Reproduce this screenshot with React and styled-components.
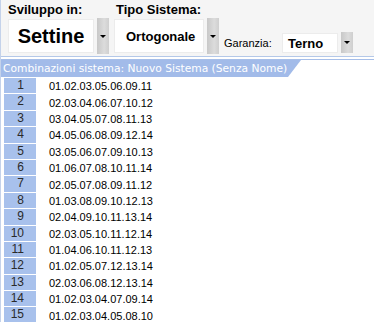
import React from "react";
import styled, { createGlobalStyle } from "styled-components";

const Global = createGlobalStyle`
  html, body { margin: 0; padding: 0; background: #ffffff; }
  body { font-family: "Liberation Sans", Arial, sans-serif; }
`;

const Page = styled.div`
  width: 374px;
  height: 322px;
  overflow: hidden;
  background: #ffffff;
  border-left: 1px solid #c4d2ea;
  box-sizing: border-box;
`;

const Toolbar = styled.div`
  height: 56px;
  background: #f5f5f5;
  display: flex;
  align-items: flex-start;
  box-sizing: border-box;
`;

const Group = styled.div`
  display: flex;
  flex-direction: column;
  margin-left: ${({ $ml }) => $ml}px;
`;

const Label = styled.div`
  font-size: 13px;
  font-weight: 700;
  color: #000;
  height: 16px;
  line-height: 16px;
  margin-top: 2px;
  padding-left: ${({ $pl }) => $pl || 0}px;
`;

const SmallLabel = styled.div`
  font-size: 11px;
  color: #000;
  margin-top: 37px;
  margin-left: 5px;
  width: 60px;
`;

const Select = styled.div`
  display: flex;
  align-items: stretch;
  margin-top: ${({ $mt }) => $mt || 0}px;
`;

const Box = styled.div`
  width: ${({ $w }) => $w}px;
  height: ${({ $h }) => $h}px;
  margin-top: 1px;
  background: #ffffff;
  border: 1px solid #ececec;
  box-sizing: border-box;
  display: flex;
  align-items: center;
  justify-content: ${({ $center }) => ($center ? "center" : "flex-start")};
  padding-left: ${({ $pl }) => $pl || 0}px;
  font-size: ${({ $fs }) => $fs}px;
  font-weight: 700;
  color: #000;
`;

const Btn = styled.div`
  width: 12px;
  height: ${({ $h }) => $h}px;
  margin-left: ${({ $ml }) => $ml || 2}px;
  background: linear-gradient(to right, #c8c8c8, #dcdcdc 60%, #cfcfcf);
  display: flex;
  align-items: center;
  justify-content: center;
`;

const Arrow = styled.div`
  width: 0;
  height: 0;
  border-left: 3px solid transparent;
  border-right: 3px solid transparent;
  border-top: 3px solid #000;
`;

const Lines = styled.div`
  height: 4px;
  border-top: 1px solid #b4c8e8;
  border-bottom: 1px solid #a6bee8;
  box-sizing: border-box;
  background: #ffffff;
`;

const TabRow = styled.div`
  height: 17px;
  display: flex;
`;

const Tab = styled.div`
  height: 17px;
  width: 300px;
  background: #a2bbe9;
  clip-path: polygon(0 0, 100% 0, 287px 100%, 0 100%);
  color: #ffffff;
  font-family: "DejaVu Sans", Verdana, sans-serif;
  font-size: 10.7px;
  line-height: 17px;
  padding-left: 2px;
  box-sizing: border-box;
  white-space: nowrap;
`;

const List = styled.div`
  display: flex;
  flex-direction: column;
  padding-top: 1px;
`;

const Row = styled.div`
  height: 16.4px;
  display: flex;
  align-items: center;
`;

const Num = styled.div`
  width: 32px;
  height: 100%;
  margin-left: 3px;
  background: #a8c1ec;
  border-bottom: 1px solid #ffffff;
  box-sizing: border-box;
  text-align: right;
  padding-right: 12px;
  font-size: 12px;
  line-height: 15px;
  color: #2a2a2a;
`;

const Combo = styled.div`
  margin-left: 13px;
  font-size: 11px;
  color: #000;
`;

const combos = [
  "01.02.03.05.06.09.11",
  "02.03.04.06.07.10.12",
  "03.04.05.07.08.11.13",
  "04.05.06.08.09.12.14",
  "03.05.06.07.09.10.13",
  "01.06.07.08.10.11.14",
  "02.05.07.08.09.11.12",
  "01.03.08.09.10.12.13",
  "02.04.09.10.11.13.14",
  "02.03.05.10.11.12.14",
  "01.04.06.10.11.12.13",
  "01.02.05.07.12.13.14",
  "02.03.06.08.12.13.14",
  "01.02.03.04.07.09.14",
  "01.02.03.04.05.08.10",
];

export default function App() {
  return (
    <Page>
      <Global />
      <Toolbar>
        <Group $ml={7}>
          <Label>Sviluppo in:</Label>
          <Select>
            <Box $w={86} $h={34} $fs={20} $center>Settine</Box>
            <Btn $h={36} $ml={3}><Arrow /></Btn>
          </Select>
        </Group>
        <Group $ml={5}>
          <Label $pl={2}>Tipo Sistema:</Label>
          <Select>
            <Box $w={90} $h={34} $fs={13} $pl={11}>Ortogonale</Box>
            <Btn $h={36} $ml={3}><Arrow /></Btn>
          </Select>
        </Group>
        <SmallLabel>Garanzia:</SmallLabel>
        <Group $ml={-2}>
          <Select $mt={32}>
            <Box $w={56} $h={20} $fs={13} $pl={5}>Terno</Box>
            <Btn $h={21} $ml={3}><Arrow /></Btn>
          </Select>
        </Group>
      </Toolbar>
      <Lines />
      <TabRow>
        <Tab>Combinazioni sistema: Nuovo Sistema (Senza Nome)</Tab>
      </TabRow>
      <List>
        {combos.map((c, i) => (
          <Row key={i}>
            <Num>{i + 1}</Num>
            <Combo>{c}</Combo>
          </Row>
        ))}
      </List>
    </Page>
  );
}
